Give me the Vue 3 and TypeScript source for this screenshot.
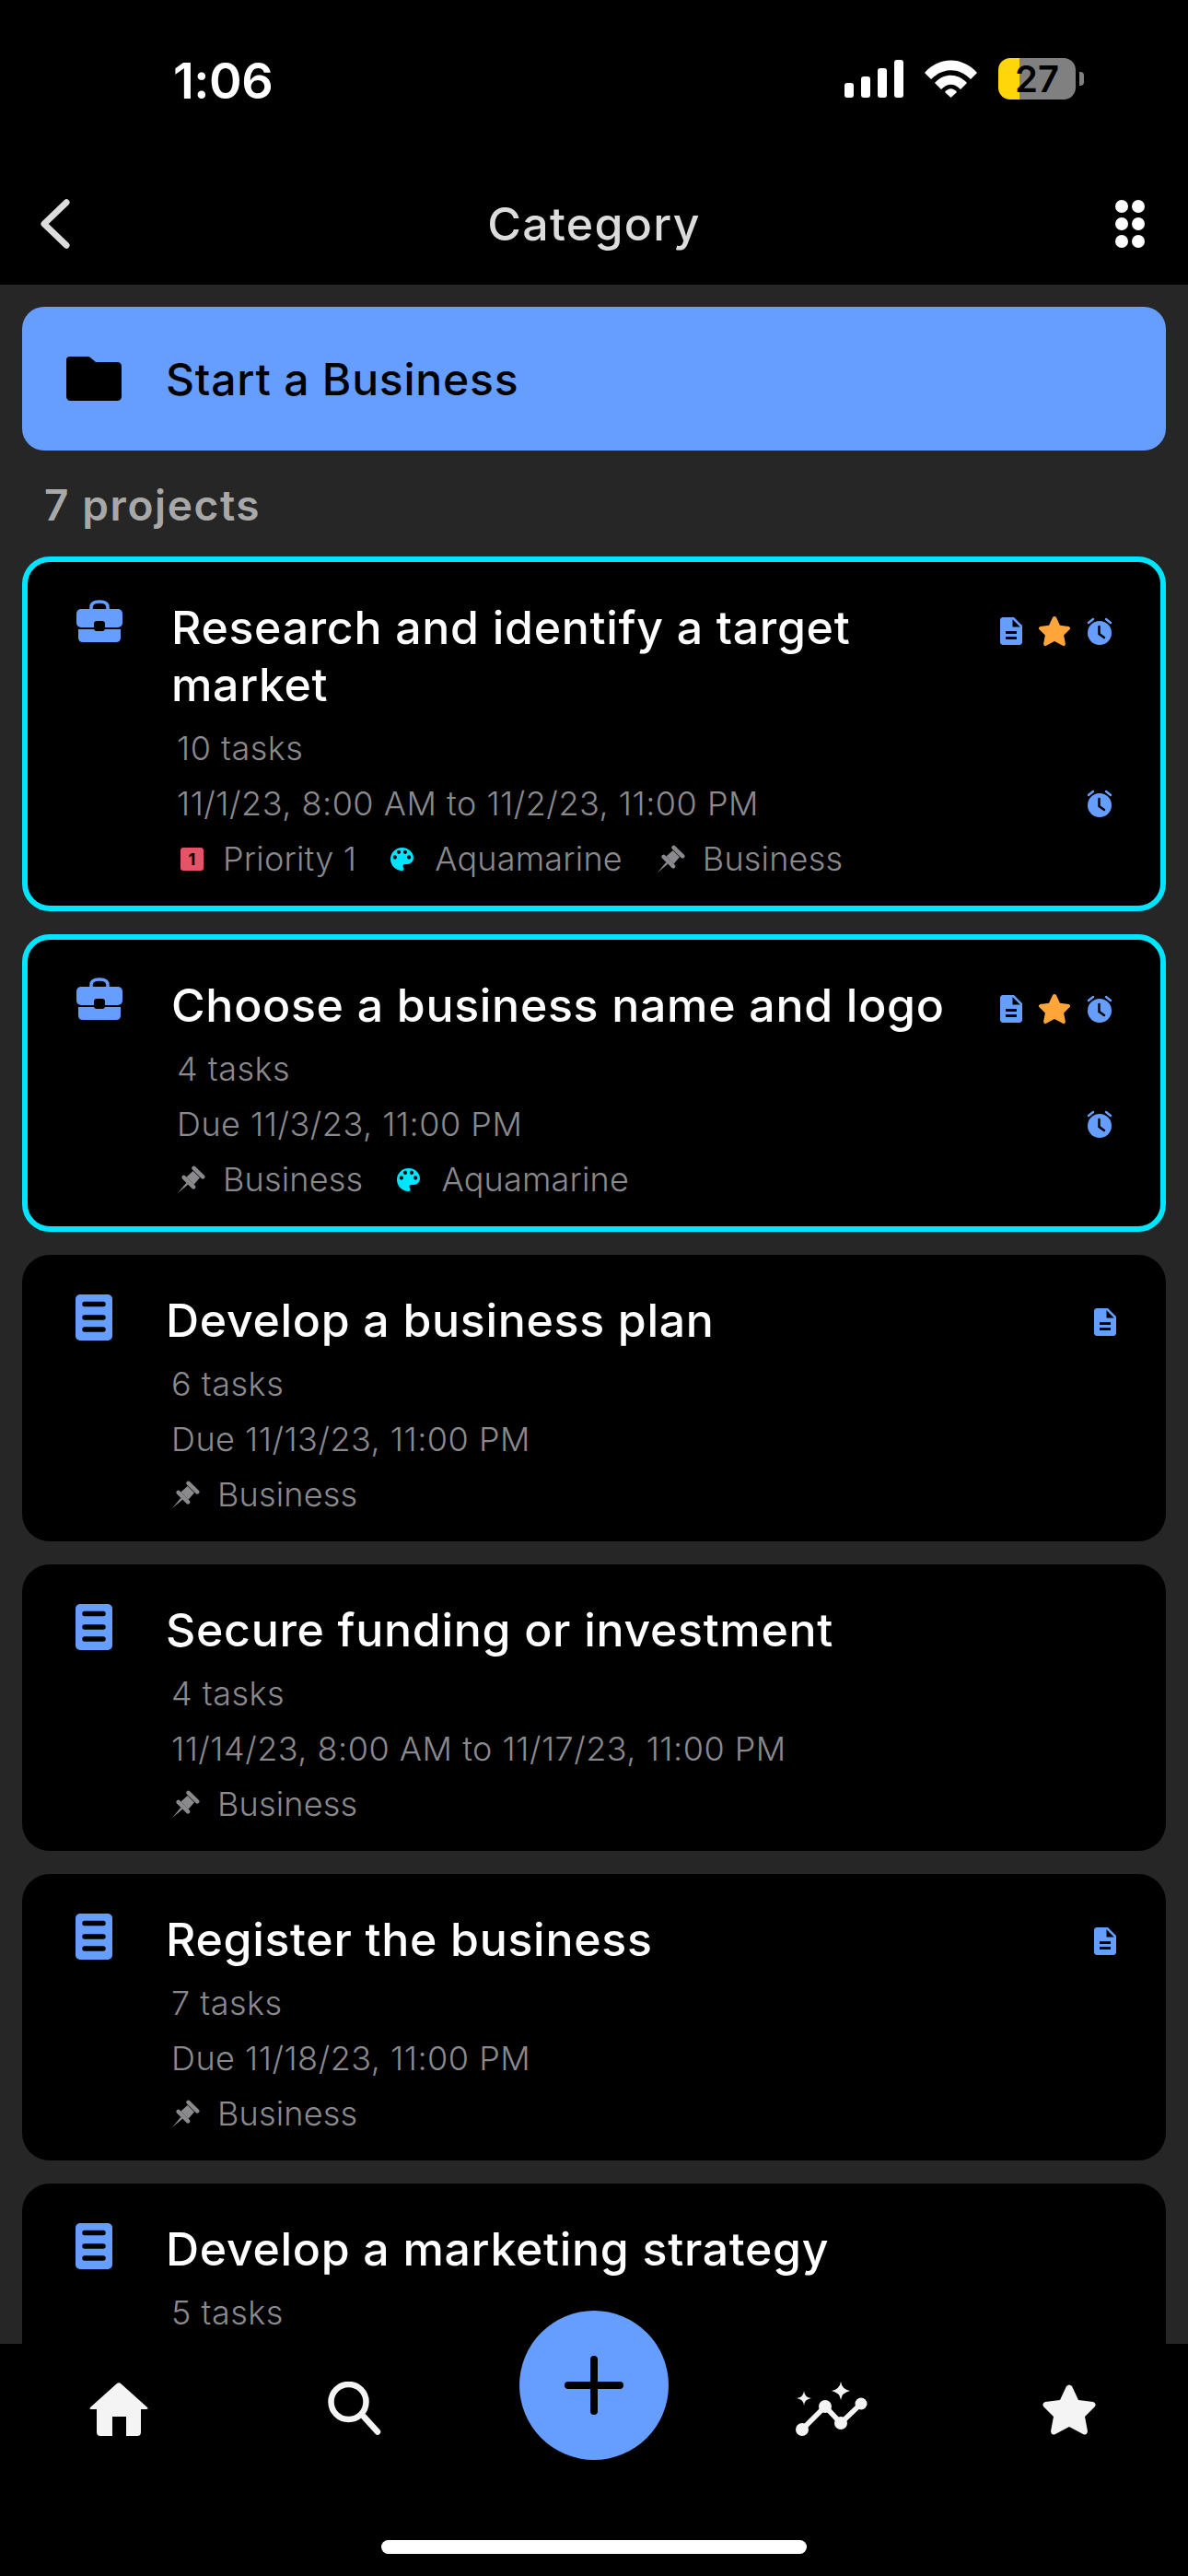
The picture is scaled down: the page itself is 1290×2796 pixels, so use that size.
<template>
  <div class="screen">
    <header class="top">
      <div class="status">
        <span class="time">1:06</span>
        <div class="status-icons">
          <div class="signal"><i></i><i></i><i></i><i></i></div>
          <svg class="wifi" viewBox="0 0 57 41">
            <path d="M0 14 C16 -4 41 -4 57 14 L50 21 C37 8 20 8 7 21Z" />
            <path d="M11 25 C21 14 36 14 46 25 L39 32 C32 25 25 25 18 32Z" />
            <path d="M22 35 C26 30 31 30 35 35 L28.500 41Z" />
          </svg>
          <div class="battery">
            <div class="battery-body"><span>27</span></div>
            <div class="battery-cap"></div>
          </div>
        </div>
      </div>
      <div class="titlebar">
        <svg class="back" viewBox="0 0 34 56"><path d="M30 4 L5 28 L30 52" /></svg>
        <h1>Category</h1>
        <div class="dots"><i v-for="n in 6" :key="n"></i></div>
      </div>
    </header>

    <main class="content">
      <div class="banner">
        <svg class="folder" viewBox="0 0 60 48"><path d="M4 0 H23 Q25 0 26 1 L32 6 H55 Q60 6 60 11 V43 Q60 48 55 48 H5 Q0 48 0 43 V4 Q0 0 4 0Z" /></svg>
        <span>Start a Business</span>
      </div>
      <div class="count">7 projects</div>

      <article v-for="p in projects" :key="p.title" class="card" :class="{ active: p.active }">
        <svg v-if="p.active" class="lead brief" viewBox="0 0 50 46">
          <path d="M16 10 V8 Q16 2 25 2 Q34 2 34 8 V10" fill="none" stroke="#669eff" stroke-width="3.500" />
          <rect x="0" y="10" width="50" height="20" rx="5" fill="#669eff" />
          <path d="M2 32 H48 V41 Q48 46 43 46 H7 Q2 46 2 41Z" fill="#669eff" />
          <rect x="19" y="23" width="12" height="11" rx="3" fill="#000" />
        </svg>
        <svg v-else class="lead" viewBox="0 0 40 50">
          <rect width="40" height="50" rx="5" fill="#669eff" />
          <path d="M10 10.500 H30 M10 25 H30 M10 38 H30" stroke="#000" stroke-width="5.500" stroke-linecap="round" />
        </svg>

        <div class="body">
          <div class="head">
            <h2>{{ p.title }}</h2>
            <div class="flags">
              <svg v-if="p.note" class="note" viewBox="4 2 16 20"><path :d="docPath" /></svg>
              <svg v-if="p.active" class="star" viewBox="0 0 60 57"><path :d="starPath" /></svg>
              <svg v-if="p.active" class="alarm" viewBox="0 0 28 30">
                <circle cx="14" cy="17" r="13" fill="#669eff" />
                <path d="M2 6 L7 2 M26 6 L21 2" stroke="#669eff" stroke-width="2.500" stroke-linecap="round" />
                <path d="M13.500 10 V18 L19 22" fill="none" stroke="#000" stroke-width="2.500" stroke-linecap="round" />
              </svg>
            </div>
          </div>
          <div class="line">{{ p.tasks }} tasks</div>
          <div class="line between">
            <span>{{ p.date }}</span>
            <svg v-if="p.active" class="alarm" viewBox="0 0 28 30">
              <circle cx="14" cy="17" r="13" fill="#669eff" />
              <path d="M2 6 L7 2 M26 6 L21 2" stroke="#669eff" stroke-width="2.500" stroke-linecap="round" />
              <path d="M13.500 10 V18 L19 22" fill="none" stroke="#000" stroke-width="2.500" stroke-linecap="round" />
            </svg>
          </div>
          <div class="line tags">
            <span v-for="t in p.tags" :key="t" class="tag">
              <span v-if="t === 'Priority 1'" class="prio">1</span>
              <svg v-else-if="t === 'Aquamarine'" class="palette" viewBox="3 3 18 18"><path :d="palettePath" /></svg>
              <svg v-else class="pin" viewBox="1.500 -1.500 24 24">
                <g transform="rotate(45 12 12)">
                  <rect x="5" y="-0.500" width="14" height="3.500" rx="1.700" />
                  <path d="M8 3.500 H16 L16.500 11 H7.500Z" />
                  <rect x="4.500" y="11" width="15" height="3.500" rx="1.700" />
                  <path d="M11 14.500 H13 L12 26Z" />
                </g>
              </svg>
              {{ t }}
            </span>
          </div>
        </div>
      </article>
    </main>

    <nav class="tabbar">
      <svg class="tab home" viewBox="0 0 64 58"><path d="M30 1 Q32 -0.500 34 1 L63 27 Q64.500 29 62 29 H56 V54 Q56 58 52 58 H40 V37 H25 V58 H12 Q8 58 8 54 V29 H2 Q-0.500 29 1 27Z" /></svg>
      <svg class="tab search" viewBox="0 0 58 59"><circle cx="22.500" cy="22" r="19" /><path d="M39 38 L54 54.500" /></svg>
      <svg class="tab chart" viewBox="0 0 78 59">
        <path class="chart-line" d="M7 52 L32 27 L49 45 L71 24" />
        <circle cx="7" cy="52" r="7" /><circle cx="32" cy="27" r="7" /><circle cx="49" cy="45" r="7" /><circle cx="71" cy="24" r="6.500" />
        <path d="M49 0 Q50 8 59 10 Q50 12 49 20 Q48 12 39 10 Q48 8 49 0Z" />
        <path d="M9 10 Q9.500 17 17 18 Q9.500 19 9 26 Q8.500 19 1 18 Q8.500 17 9 10Z" />
      </svg>
      <svg class="tab fav" viewBox="0 0 60 57"><path :d="starPath" /></svg>
    </nav>

    <button class="fab">
      <svg viewBox="0 0 64 64"><path d="M32 4 V60 M4 32 H60" /></svg>
    </button>
    <div class="home-bar"></div>
  </div>
</template>

<script setup lang="ts">
interface Project {
  title: string
  tasks: number
  date: string
  tags: string[]
  note?: boolean
  active?: boolean
}

const docPath = 'M14 2H6c-1.100 0-2 .9-2 2v16c0 1.100.9 2 2 2h12c1.100 0 2-.9 2-2V8l-6-6zm2 16H8v-2h8v2zm0-4H8v-2h8v2zm-3-5V3.500L18.500 9H13z'
const palettePath = 'M12 3c-4.970 0-9 4.030-9 9s4.030 9 9 9c.83 0 1.500-.67 1.500-1.500 0-.39-.15-.74-.39-1.010-.23-.26-.38-.61-.38-.99 0-.83.67-1.500 1.500-1.500H16c2.760 0 5-2.240 5-5 0-4.420-4.030-8-9-8zm-5.500 9c-.83 0-1.500-.67-1.500-1.500S5.670 9 6.500 9 8 9.670 8 10.500 7.330 12 6.500 12zm3-4C8.670 8 8 7.330 8 6.500S8.670 5 9.500 5s1.500.67 1.500 1.500S10.330 8 9.500 8zm5 0c-.83 0-1.500-.67-1.500-1.500S13.670 5 14.500 5s1.500.67 1.500 1.500S15.330 8 14.500 8zm3 4c-.83 0-1.500-.67-1.500-1.500S16.670 9 17.500 9s1.500.67 1.500 1.500-.67 1.500-1.500 1.500z'
const starPath = 'M27 3 Q30 0 33 3 L40 18 L56 20 Q60 22 58 25 L47 36 L50 52 Q49 57 45 55 L30 47 L15 55 Q11 57 10 52 L13 36 L2 25 Q0 22 4 20 L20 18Z'

const projects: Project[] = [
  { title: 'Research and identify a target market', tasks: 10, date: '11/1/23, 8:00 AM to 11/2/23, 11:00 PM', tags: ['Priority 1', 'Aquamarine', 'Business'], note: true, active: true },
  { title: 'Choose a business name and logo', tasks: 4, date: 'Due 11/3/23, 11:00 PM', tags: ['Business', 'Aquamarine'], note: true, active: true },
  { title: 'Develop a business plan', tasks: 6, date: 'Due 11/13/23, 11:00 PM', tags: ['Business'], note: true },
  { title: 'Secure funding or investment', tasks: 4, date: '11/14/23, 8:00 AM to 11/17/23, 11:00 PM', tags: ['Business'] },
  { title: 'Register the business', tasks: 7, date: 'Due 11/18/23, 11:00 PM', tags: ['Business'], note: true },
  { title: 'Develop a marketing strategy', tasks: 5, date: 'Due 11/20/23, 11:00 PM', tags: ['Business'] }
]
</script>

<style>
body { background: #000; }
</style>

<style scoped>
.screen { position: relative; width: 1290px; height: 2796px; display: flex; flex-direction: column; overflow: hidden; background: #262626; font-family: Inter, "Liberation Sans", sans-serif; }

/* header */
.top { background: #000; height: 309px; flex: none; }
.status { height: 180px; padding: 0 113px 6px 188px; box-sizing: border-box; display: flex; align-items: center; justify-content: space-between; }
.time { color: #fff; font-size: 54px; font-weight: 600; letter-spacing: -0.5px; }
.status-icons { display: flex; align-items: center; gap: 23px; margin-top: -4px; }
.signal { display: flex; align-items: flex-end; gap: 8px; height: 41px; }
.signal i { width: 10px; border-radius: 3px; background: #fff; }
.signal i:nth-child(1) { height: 16px; }
.signal i:nth-child(2) { height: 23px; }
.signal i:nth-child(3) { height: 32px; }
.signal i:nth-child(4) { height: 41px; }
.wifi { width: 57px; height: 41px; fill: #fff; }
.battery { display: flex; align-items: center; gap: 4px; }
.battery-body { width: 84px; height: 45px; border-radius: 13px; background: linear-gradient(90deg, #ffd60a 27%, #808080 27%); display: flex; align-items: center; justify-content: center; }
.battery-body span { font-size: 40px; font-weight: 600; color: #000; }
.battery-cap { width: 5px; height: 15px; background: #808080; border-radius: 0 4px 4px 0; }

.titlebar { height: 129px; padding: 0 47px 4px 43px; box-sizing: border-box; display: flex; align-items: center; justify-content: space-between; position: relative; }
.back { width: 33px; height: 56px; fill: none; stroke: #dcdcdc; stroke-width: 7; stroke-linecap: round; stroke-linejoin: round; }
.titlebar h1 { position: absolute; left: 0; right: 0; margin: 0; text-align: center; font-size: 50px; font-weight: 500; color: #dcdcdc; letter-spacing: 1.300px; }
.dots { width: 32px; display: grid; grid-template-columns: 14px 14px; justify-content: space-between; row-gap: 5px; }
.dots i { width: 14px; height: 14px; border-radius: 50%; background: #fff; }

/* list */
.content { flex: 1; min-height: 0; overflow: hidden; padding: 24px 24px 0; }
.banner { height: 156px; border-radius: 24px; background: #669eff; display: flex; align-items: center; padding-left: 48px; gap: 48px; color: #000; font-size: 48px; font-weight: 500; letter-spacing: 0.800px; }
.folder { width: 60px; height: 48px; fill: #000; }
.count { margin: 29px 0 26px 24px; line-height: 60px; font-size: 46px; font-weight: 600; color: #a8a8a8; letter-spacing: 1.600px; }

.card { display: flex; align-items: flex-start; background: #000; border-radius: 30px; padding: 40px 54px 21px 58px; margin-bottom: 25px; }
.card.active { border: 6px solid #00e5ff; padding: 40px 52px 21px 53px; }
.lead { flex: none; width: 40px; height: 50px; margin: 3px 58px 0 0; }
.lead.brief { width: 50px; height: 46px; margin: 1px 53px 0 0; }
.body { flex: 1; min-width: 0; }
.head { display: flex; align-items: flex-start; justify-content: space-between; margin-bottom: 8px; }
.head h2 { margin: 0; font-size: 50px; line-height: 62px; font-weight: 450; letter-spacing: 0.700px; color: #fff; max-width: 840px; }
.flags { display: flex; gap: 17px; align-items: center; padding-top: 18px; flex: none; }
.note { width: 24px; height: 30px; fill: #669eff; }
.star { width: 36px; height: 34px; fill: #ffa53a; }
.alarm { width: 28px; height: 30px; }
.line { height: 60px; margin-left: 6px; display: flex; align-items: center; color: #8a8a8e; font-size: 36px; font-weight: 300; letter-spacing: 0.500px; }
.between { justify-content: space-between; }
.tags { gap: 37px; letter-spacing: 0.200px; }
.tag { display: flex; align-items: center; gap: 21px; }
.prio { width: 25px; height: 25px; border-radius: 3px; background: #e55369; color: #000; font-size: 18px; font-weight: 700; display: flex; align-items: center; justify-content: center; margin-left: 4px; }
.palette { width: 25px; height: 25px; fill: #00e5ff; margin-right: 2px; }
.pin { width: 31px; height: 31px; fill: #8a8a8e; margin-right: -2px; }

/* bottom */
.tabbar { flex: none; height: 252px; background: #000; position: relative; display: flex; align-items: flex-start; padding: 41px 0 0 97px; box-sizing: border-box; }
.home { width: 64px; height: 58px; fill: #f4f4f4; margin-top: 1px; }
.search { width: 58px; height: 59px; margin: 0 0 0 195px; fill: none; stroke: #f4f4f4; stroke-width: 6.500; stroke-linecap: round; }
.chart { width: 78px; height: 59px; margin-left: 450px; fill: #f4f4f4; }
.chart-line { fill: none; stroke: #f4f4f4; stroke-width: 5.500; }
.fav { width: 60px; height: 57px; margin: 2px 0 0 189px; fill: #f4f4f4; }
.fab { position: absolute; left: 564px; top: 2508px; width: 162px; height: 162px; border: 0; padding: 0; border-radius: 50%; background: #669eff; display: flex; align-items: center; justify-content: center; }
.fab svg { width: 64px; height: 64px; fill: none; stroke: #000; stroke-width: 8; stroke-linecap: round; }
.home-bar { position: absolute; left: 414px; top: 2757px; width: 462px; height: 15px; border-radius: 8px; background: #fff; }
</style>
